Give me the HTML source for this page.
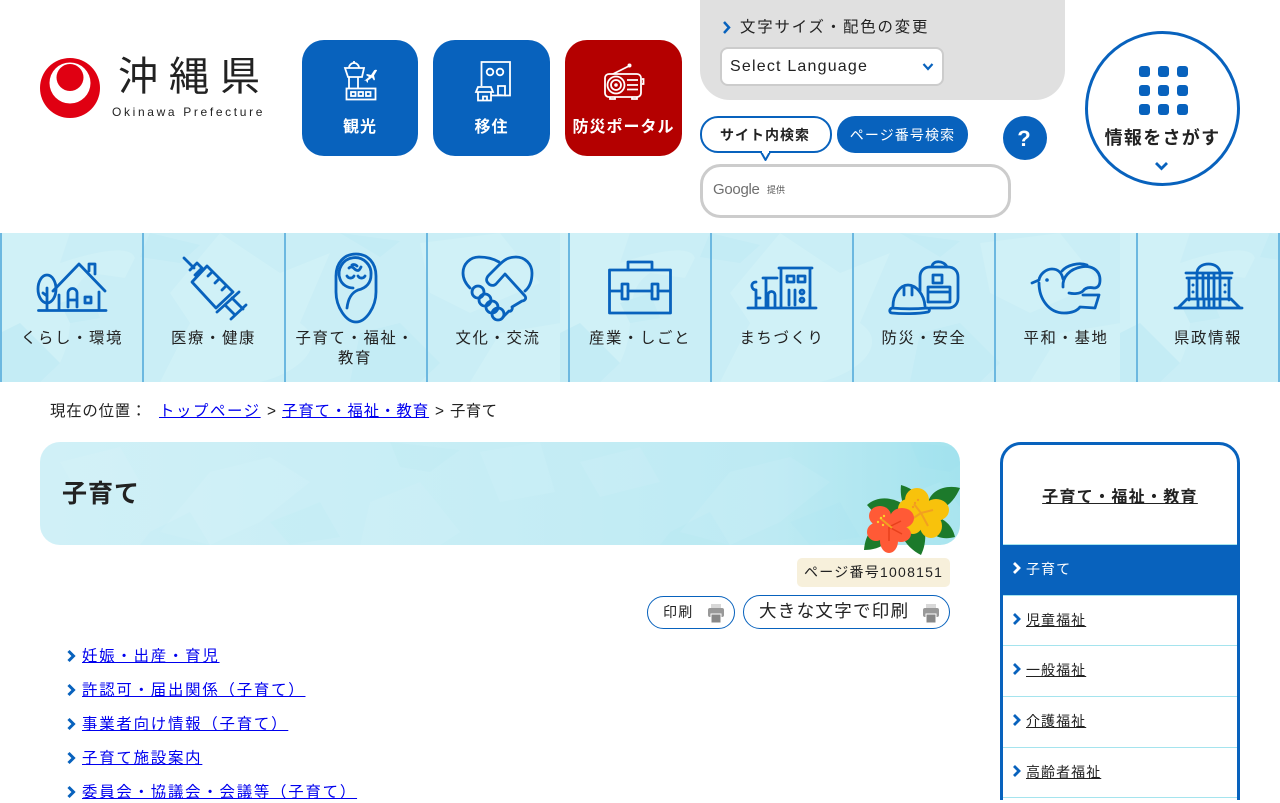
<!DOCTYPE html>
<html lang="ja">
<head>
<meta charset="utf-8">
<title>子育て - 沖縄県</title>
<style>
html,body{margin:0;padding:0;background:#fff}
body{width:1280px;height:800px;overflow:hidden;position:relative;font-family:"Liberation Sans","Noto Sans CJK JP",sans-serif;color:#222;font-size:15.4px;letter-spacing:1.6px}
.t{position:absolute;line-height:20px;white-space:nowrap}
.c{text-align:center}
a{color:#00e}
.w{color:#fff;font-weight:bold}
.nav{width:142px;text-align:center;color:#222;line-height:20px}
.side{position:absolute;left:1026px;color:#222;text-decoration:underline;font-size:14px;letter-spacing:1.05px;line-height:20px;white-space:nowrap}
.l{letter-spacing:1.8px}
svg{position:absolute;left:0;top:0}
</style>
</head>
<body>
<svg width="1280" height="800" viewBox="0 0 1280 800" style="z-index:0">
<defs>
<pattern id="cam" width="560" height="149" patternUnits="userSpaceOnUse" patternTransform="translate(0 233)">
<rect width="560" height="149" fill="#caeef6"/>
<path d="M0 0H70L60 30C90 20 130 10 135 25L125 45 90 40C60 60 80 90 60 130L30 149H0ZM220 0L280 40 330 20 300 90C330 110 300 140 260 149H160L190 90 170 60ZM420 10L500 0 540 50 470 80 430 60ZM500 100L560 90V149H470Z" fill="#d0f1f7"/>
<path d="M150 0L200 12 180 30 140 24ZM0 100L20 90 60 130 40 149H0ZM360 100L400 90 440 130 420 149H350ZM340 0L400 8 380 24ZM60 70L90 60 100 85 70 90Z" fill="#c4ecf5"/>
</pattern>
<pattern id="cam2" width="520" height="103" patternUnits="userSpaceOnUse" patternTransform="translate(40 442)">
<path d="M170 30L230 15 270 40 220 80 170 103 120 90ZM330 60L380 40 420 90 400 103H320ZM20 20L80 5 100 40 40 55ZM440 10L500 0 515 50 460 60Z" fill="#fff" fill-opacity=".06"/>
<path d="M230 80L280 60 300 95 250 103ZM350 0L420 8 390 30 360 25ZM110 90L150 70 170 103H100Z" fill="#5ccadf" fill-opacity=".04"/>
</pattern>
<linearGradient id="tg" x1="0" x2="1" y1="0" y2="0"><stop offset="0" stop-color="#d0f0f7"/><stop offset=".5" stop-color="#c6edf5"/><stop offset=".8" stop-color="#bdeaf3"/><stop offset="1" stop-color="#a4e3ee"/></linearGradient>
</defs>
<rect x="0" y="233" width="1280" height="149" fill="url(#cam)"/>
<g fill="#6cb8e0">
<rect x="0" y="233" width="2" height="149"/><rect x="142" y="233" width="2" height="149"/><rect x="284" y="233" width="2" height="149"/><rect x="426" y="233" width="2" height="149"/><rect x="568" y="233" width="2" height="149"/><rect x="710" y="233" width="2" height="149"/><rect x="852" y="233" width="2" height="149"/><rect x="994" y="233" width="2" height="149"/><rect x="1136" y="233" width="2" height="149"/><rect x="1278" y="233" width="2" height="149"/>
</g>
<rect x="40" y="442" width="920" height="103" rx="20" fill="url(#tg)"/>
<rect x="40" y="442" width="920" height="103" rx="20" fill="url(#cam2)"/>

<!-- logo -->
<circle cx="70" cy="88" r="30" fill="#e00012"/><circle cx="70" cy="83" r="20.500" fill="#fff"/><circle cx="70" cy="77.500" r="13.500" fill="#e00012"/>

<!-- top buttons -->
<rect x="302" y="40" width="116" height="116" rx="22" fill="#0862bd"/>
<rect x="433" y="40" width="117" height="116" rx="22" fill="#0862bd"/>
<rect x="565" y="40" width="117" height="116" rx="22" fill="#b40000"/>
<g fill="none" stroke="#fff" stroke-width="1.800">
<path d="M349 68a5 5 0 0 1 10 0M354 61v2M345 68h19l-2 9h-14zM349 77v11M358 77v11"/>
<rect x="346.500" y="88.500" width="29" height="11"/><rect x="351" y="92" width="4.500" height="4"/><rect x="358.500" y="92" width="4.500" height="4"/><rect x="366" y="92" width="4.500" height="4"/>
<path d="M481.500 86V62H510V95.500H505"/>
<circle cx="490" cy="72" r="3.300"/><circle cx="500" cy="72" r="3.300"/>
<path d="M498 95V86h7v9.500zM476 92l2-5h13l2 5zM478 92v8.500h13V92M483 100.500v-4h4v4M491 95.500h14"/>
<rect x="605" y="74" width="36" height="23" rx="4"/>
<circle cx="616" cy="85" r="8.500"/><circle cx="616" cy="85" r="5"/>
<path d="M627 80h11M627 85h11M627 89.500h11M613 74l16-8M610 97v2h5v-2M632 97v2h5v-2M642 79h1.500v5H642"/>
</g>
<path d="M364 81l5-4-3-2 1-1 4 1 3-4.500c1-1 3-1 3 0l-3 5 1 4-1 1-2-3-4 3 0 2-1 0-1-2z" fill="#fff"/>
<circle cx="629.500" cy="65.500" r="2" fill="#fff"/>
<circle cx="616" cy="85" r="1.800" fill="#fff"/>

<!-- top right panel -->
<path d="M700 0H1065V70a30 30 0 0 1-30 30H730a30 30 0 0 1-30-30Z" fill="#e0e0e0"/>
<path d="M724 22l5 5.500-5 5.500" fill="none" stroke="#0862bd" stroke-width="2.500"/>
<rect x="721" y="48" width="222" height="37" rx="7" fill="#fff" stroke="#ccc" stroke-width="2"/>
<path d="M923.500 64l4.500 5 4.500-5" fill="none" stroke="#0862bd" stroke-width="2.200"/>
<rect x="701" y="117" width="130" height="35" rx="17" fill="#fff" stroke="#0862bd" stroke-width="2"/>
<path d="M761 152l4.500 8 4.500-8" fill="#fff" stroke="#0862bd" stroke-width="2" stroke-linejoin="round"/>
<rect x="762" y="150" width="7" height="3" fill="#fff"/>
<rect x="837" y="116" width="131" height="37" rx="18" fill="#0862bd"/>
<circle cx="1025" cy="138" r="22" fill="#0862bd"/>
<rect x="701.500" y="165.500" width="308" height="51" rx="19" fill="#fff" stroke="#ccc" stroke-width="3"/>
<circle cx="1162.500" cy="108.500" r="76" fill="#fff" stroke="#0862bd" stroke-width="3"/>
<g fill="#0862bd">
<rect x="1139" y="66" width="11" height="11" rx="3"/><rect x="1158" y="66" width="11" height="11" rx="3"/><rect x="1177" y="66" width="11" height="11" rx="3"/>
<rect x="1139" y="85" width="11" height="11" rx="3"/><rect x="1158" y="85" width="11" height="11" rx="3"/><rect x="1177" y="85" width="11" height="11" rx="3"/>
<rect x="1139" y="104" width="11" height="11" rx="3"/><rect x="1158" y="104" width="11" height="11" rx="3"/><rect x="1177" y="104" width="11" height="11" rx="3"/>
</g>
<path d="M1156 163l5.500 5.500 5.500-5.500" fill="none" stroke="#0862bd" stroke-width="2.800"/>

<!-- nav icons -->
<g fill="none" stroke="#0862bd" stroke-width="2.800" stroke-linejoin="round" stroke-linecap="round">
<!-- house -->
<path d="M38.500 310.500H106M53 291l26-27 26 27M89 271v-7h6v10M59 295v15M99 292v18M68 307v-14a4.500 4.500 0 0 1 9 0v14M68 300h9"/>
<rect x="85" y="297" width="6" height="6"/>
<ellipse cx="47" cy="289" rx="9" ry="14"/><path d="M47 288v22M47 296l-4-3"/>
<!-- syringe -->
<path d="M184 258l10 10M190 270l7-7 5 5-7 7M192 282l15-16 26 26-17 16zM212 272l-4 4M219 279l-4 4M226 286l-4 4M217 312l22-20M225 305l10 10M232 298l11 11M231 319l15-14"/>
<!-- baby -->
<path d="M356 254c12 0 20 9 20 22v16c0 15-10 30-20 30s-20-15-20-30v-16c0-13 8-22 20-22z"/>
<path d="M347 308c1-9 4-15 11-18 9-2 13-8 13-15a16 16 0 1 0-31 4c2 6 8 9 13 9"/>
<path d="M347 276a4 4 0 0 0 7 0M358 276a4 4 0 0 0 7 0M349 268c3-3 5 1 7 2s3 1 5-3M352 265c2-1 4 0 5 1"/>
<!-- heart -->
<path d="M470 288c-5-5-7-10-7-15 0-9 7-16 16-16 8 0 15 2 20 5"/>
<path d="M525 291c6-5 7-12 7-18 0-9-7-16-16-16-8 0-12 3-18 9l-9 9c-3 3-3 6-1 8 2 3 6 3 8 1l9-10 20 22c2 3-1 5-3 5l-10 6c1 2-1 5-3 4l-6 6"/>
<circle cx="478" cy="292" r="6"/><circle cx="485" cy="300" r="6"/><circle cx="492" cy="307" r="6"/><circle cx="498" cy="314" r="6"/>
<!-- briefcase -->
<path d="M609.500 270h61v43h-61zM628 270v-8h24v8M609.500 291h12M628 291h24M658 291h12.500"/>
<rect x="622" y="284" width="6" height="15"/><rect x="652" y="284" width="6" height="15"/>
<!-- city -->
<path d="M748 308h68M779 268h33M781 268v40M810 268v40M763 278h14M766 278v30M768 308v-13a3.500 3.500 0 0 1 7 0v13M756 308v-18c-5 0-6-8 0-8M760 298h-4"/>
<rect x="787" y="276" width="7" height="6"/><rect x="798" y="276" width="7" height="6"/>
<path d="M789 290v15M795 290v15"/>
<circle cx="802" cy="292" r="2"/><circle cx="802" cy="300" r="2"/>
<!-- helmet/bag -->
<path d="M920 291v-14c0-6 4-10 10-10h18c6 0 10 4 10 10v21c0 6-4 10-10 10h-18M932 267c0-7 12-7 15 0"/>
<rect x="933" y="275" width="9" height="8"/><path d="M928 287h22v15h-22zM928 292h22"/>
<path d="M893 306c0-11 7-21 15-21s16 9 17 21M904 287v8M912 287v8M892 308c-3 1-3 5 0 5 10 1 26 1 36-1 2-1 2-4-1-4-11 1-24 1-35 0z"/>
<!-- dove -->
<path d="M1032 283l7-3c1-6 7-11 13-11 7 0 10 5 11 10M1039 283c0 16 10 30 25 30 7 0 13-2 16-6l15 1 4-13h-16"/>
<path d="M1063 287c-1-10 7-18 18-20 9-2 19 2 19 13 0 5-2 8-6 8-5-1-9 0-11 3-3 3-10 3-14 2M1062 271c5-6 17-9 25-6"/>
<!-- gov -->
<path d="M1175 308h67M1186 273h46M1187 278h44M1197 273c0-12 23-12 23 0M1189 278v22M1229 278v22M1197 273v25M1220 273v25M1203 273v24M1208.500 273v24M1214 273v24M1197 299h23M1198 299v9M1204 299v9M1209 299v9M1214 299v9M1220 299v9M1187 299l-9 9M1231 299l9 9M1187 299h10M1220 299h11"/>
</g>
<g fill="#0862bd">
<circle cx="1047" cy="280" r="1.800"/>
<circle cx="1193" cy="285" r="1.500"/><circle cx="1193" cy="292" r="1.500"/><circle cx="1225" cy="285" r="1.500"/><circle cx="1225" cy="292" r="1.500"/>
</g>

<!-- hibiscus -->
<g fill="#1c7a2b">
<path d="M901 485C908 487 916 491 919 497L906 510C902 504 900 494 901 485z"/>
<path d="M928 503C930 491 945 484 960 488C955 500 945 511 932 511z"/>
<path d="M925 518C936 514 951 520 955 537C940 541 927 535 925 518z"/>
<path d="M905 535L918 524 925 532C926 541 924 549 921 555C913 551 905 544 902 535z"/>
<path d="M867 505C878 495 895 497 907 507L895 518 876 515z"/>
<path d="M864 550C865 537 870 530 876 528L887 542C881 548 872 550 864 550z"/>
</g>
<g fill="#f8c20c">
<ellipse cx="917" cy="500" rx="12" ry="12"/><ellipse cx="936" cy="510" rx="13" ry="11"/><ellipse cx="931" cy="526" rx="11" ry="12"/><ellipse cx="913" cy="522" rx="10" ry="12"/><ellipse cx="908" cy="509" rx="10" ry="10"/><circle cx="921" cy="512" r="9"/>
</g>
<path d="M921 513l-7-9M921 513l12-3M921 513l7 13M921 513l-9 6" stroke="#f2a020" stroke-width="2" fill="none"/>
<g fill="#ff5a36">
<ellipse cx="880" cy="516" rx="11" ry="10"/><ellipse cx="902" cy="518" rx="12" ry="10"/><ellipse cx="901" cy="534" rx="10" ry="8"/><ellipse cx="889" cy="541" rx="9" ry="12"/><ellipse cx="876" cy="532" rx="9" ry="9"/><circle cx="889" cy="527" r="9"/>
</g>
<path d="M889 527l12-6M889 527l13 7M889 527l0 14" stroke="#e8401c" stroke-width="1.500" fill="none"/>
<path d="M880 518l12 10" stroke="#f2a020" stroke-width="2"/>
<g fill="#ffd02a"><circle cx="881" cy="518" r="1.200"/><circle cx="884" cy="516" r="1.200"/><circle cx="878" cy="522" r="1.200"/><circle cx="883" cy="525" r="1.200"/></g>
<g fill="#f39a20"><circle cx="915" cy="503" r="1.200"/><circle cx="918" cy="500" r="1.200"/><circle cx="913" cy="507" r="1.200"/></g>

<!-- print icons -->
<g>
<path d="M711 604h10v4h-10z" fill="#d8d8d8"/><rect x="708" y="608" width="16" height="9" rx="2" fill="#999"/><rect x="711" y="614" width="10" height="9" fill="#888" stroke="#fff"/>
<path d="M926 604h10v4h-10z" fill="#d8d8d8"/><rect x="923" y="608" width="16" height="9" rx="2" fill="#999"/><rect x="926" y="614" width="10" height="9" fill="#888" stroke="#fff"/>
</g>
<rect x="797" y="558" width="153" height="29" rx="5" fill="#f7f0db"/>
<rect x="647.500" y="596.500" width="87" height="32" rx="16" fill="none" stroke="#0862bd"/>
<rect x="743.500" y="595.500" width="206" height="33" rx="16.500" fill="none" stroke="#0862bd"/>

<!-- list chevrons -->
<path d="M68.500 651l5 5-5 5M68.500 685l5 5-5 5M68.500 719l5 5-5 5M68.500 753l5 5-5 5M68.500 787l5 5-5 5" fill="none" stroke="#0862bd" stroke-width="3"/>

<!-- sidebar -->
<path d="M1001.500 800V463a19.500 19.500 0 0 1 19.500-19.500h198a19.500 19.500 0 0 1 19.500 19.500V800" fill="#fff" stroke="#0862bd" stroke-width="3"/>
<rect x="1003" y="545" width="234" height="50" fill="#0862bd"/>
<g fill="#a5e4ee"><rect x="1003" y="544" width="234" height="1"/><rect x="1003" y="595" width="234" height="1"/><rect x="1003" y="645" width="234" height="1"/><rect x="1003" y="696" width="234" height="1"/><rect x="1003" y="747" width="234" height="1"/><rect x="1003" y="797" width="234" height="1"/></g>
<path d="M1014 563l5 5-5 5" fill="none" stroke="#fff" stroke-width="2.800"/>
<path d="M1014 614l5 5-5 5M1014 664l5 5-5 5M1014 715l5 5-5 5M1014 766l5 5-5 5" fill="none" stroke="#0862bd" stroke-width="2.800"/>
</svg>

<div style="position:absolute;left:0;top:0;z-index:1;width:1280px;height:800px">
<div class="t" style="left:118px;top:46px;font-size:40px;line-height:62px;letter-spacing:11px;font-weight:400;color:#222">沖縄県</div>
<div class="t" style="left:112px;top:102px;font-size:12px;letter-spacing:2.650px;color:#222">Okinawa Prefecture</div>

<div class="t w c" style="left:302px;top:118px;width:116px;font-size:16px;letter-spacing:1px">観光</div>
<div class="t w c" style="left:433px;top:118px;width:117px;font-size:16px;letter-spacing:1px">移住</div>
<div class="t w c" style="left:565px;top:118px;width:117px;font-size:16px;letter-spacing:1px">防災ポータル</div>

<div class="t" style="left:740px;top:18px;letter-spacing:1.850px">文字サイズ・配色の変更</div>
<div class="t" style="left:730px;top:57px;font-size:16px;letter-spacing:1.200px">Select Language</div>
<div class="t c" style="left:700px;top:125px;width:130px;font-size:14px;font-weight:bold;letter-spacing:1px">サイト内検索</div>
<div class="t c" style="left:837px;top:125px;width:131px;font-size:14px;color:#fff;letter-spacing:1.100px">ページ番号検索</div>
<div class="t c" style="left:1002px;top:129px;width:44px;font-size:22px;font-weight:bold;color:#fff;letter-spacing:0">?</div>
<div class="t" style="left:713px;top:180px;font-size:15px;letter-spacing:-.3px;color:#6f6f6f">Google</div>
<div class="t" style="left:767px;top:180px;font-size:9px;letter-spacing:0;color:#555">提供</div>
<div class="t c" style="left:1085px;top:128px;width:155px;font-size:18px;font-weight:bold;letter-spacing:1.300px">情報をさがす</div>

<div class="t nav" style="left:1px;top:329px">くらし・環境</div>
<div class="t nav" style="left:142.500px;top:329px">医療・健康</div>
<div class="t nav" style="left:284px;top:329px;white-space:normal">子育て・福祉・<br>教育</div>
<div class="t nav" style="left:427px;top:329px">文化・交流</div>
<div class="t nav" style="left:569px;top:329px">産業・しごと</div>
<div class="t nav" style="left:711px;top:329px">まちづくり</div>
<div class="t nav" style="left:853px;top:329px">防災・安全</div>
<div class="t nav" style="left:995px;top:329px">平和・基地</div>
<div class="t nav" style="left:1137px;top:329px">県政情報</div>

<div class="t" style="left:50px;top:402px;letter-spacing:.8px">現在の位置：</div>
<div class="t" style="left:159px;top:402px"><a href="#">トップページ</a></div>
<div class="t" style="left:267px;top:402px;letter-spacing:0">&gt;</div>
<div class="t" style="left:282px;top:402px;letter-spacing:.95px"><a href="#">子育て・福祉・教育</a></div>
<div class="t" style="left:435px;top:402px;letter-spacing:0">&gt;</div>
<div class="t" style="left:450px;top:402px;letter-spacing:.4px">子育て</div>

<div class="t" style="left:62px;top:478px;font-size:25px;line-height:32px;font-weight:bold;letter-spacing:1px">子育て</div>
<div class="t" style="left:804px;top:562px;font-size:14px;letter-spacing:1.250px">ページ番号1008151</div>
<div class="t" style="left:663px;top:602px;font-size:14px;letter-spacing:1.200px">印刷</div>
<div class="t" style="left:759px;top:601px;font-size:17.500px;letter-spacing:1.300px">大きな文字で印刷</div>

<div class="t l" style="left:82px;top:647px"><a href="#">妊娠・出産・育児</a></div>
<div class="t l" style="left:82px;top:681px"><a href="#">許認可・届出関係（子育て）</a></div>
<div class="t l" style="left:82px;top:715px"><a href="#">事業者向け情報（子育て）</a></div>
<div class="t l" style="left:82px;top:749px"><a href="#">子育て施設案内</a></div>
<div class="t l" style="left:82px;top:783px"><a href="#">委員会・協議会・会議等（子育て）</a></div>

<div class="t c" style="left:1003px;top:488px;width:234px;font-size:16px;font-weight:bold;letter-spacing:1.300px;text-decoration:underline">子育て・福祉・教育</div>
<div class="side" style="top:559px;color:#fff;text-decoration:none">子育て</div>
<div class="side" style="top:610px">児童福祉</div>
<div class="side" style="top:660px">一般福祉</div>
<div class="side" style="top:711px">介護福祉</div>
<div class="side" style="top:762px">高齢者福祉</div>
</div>
</body>
</html>
